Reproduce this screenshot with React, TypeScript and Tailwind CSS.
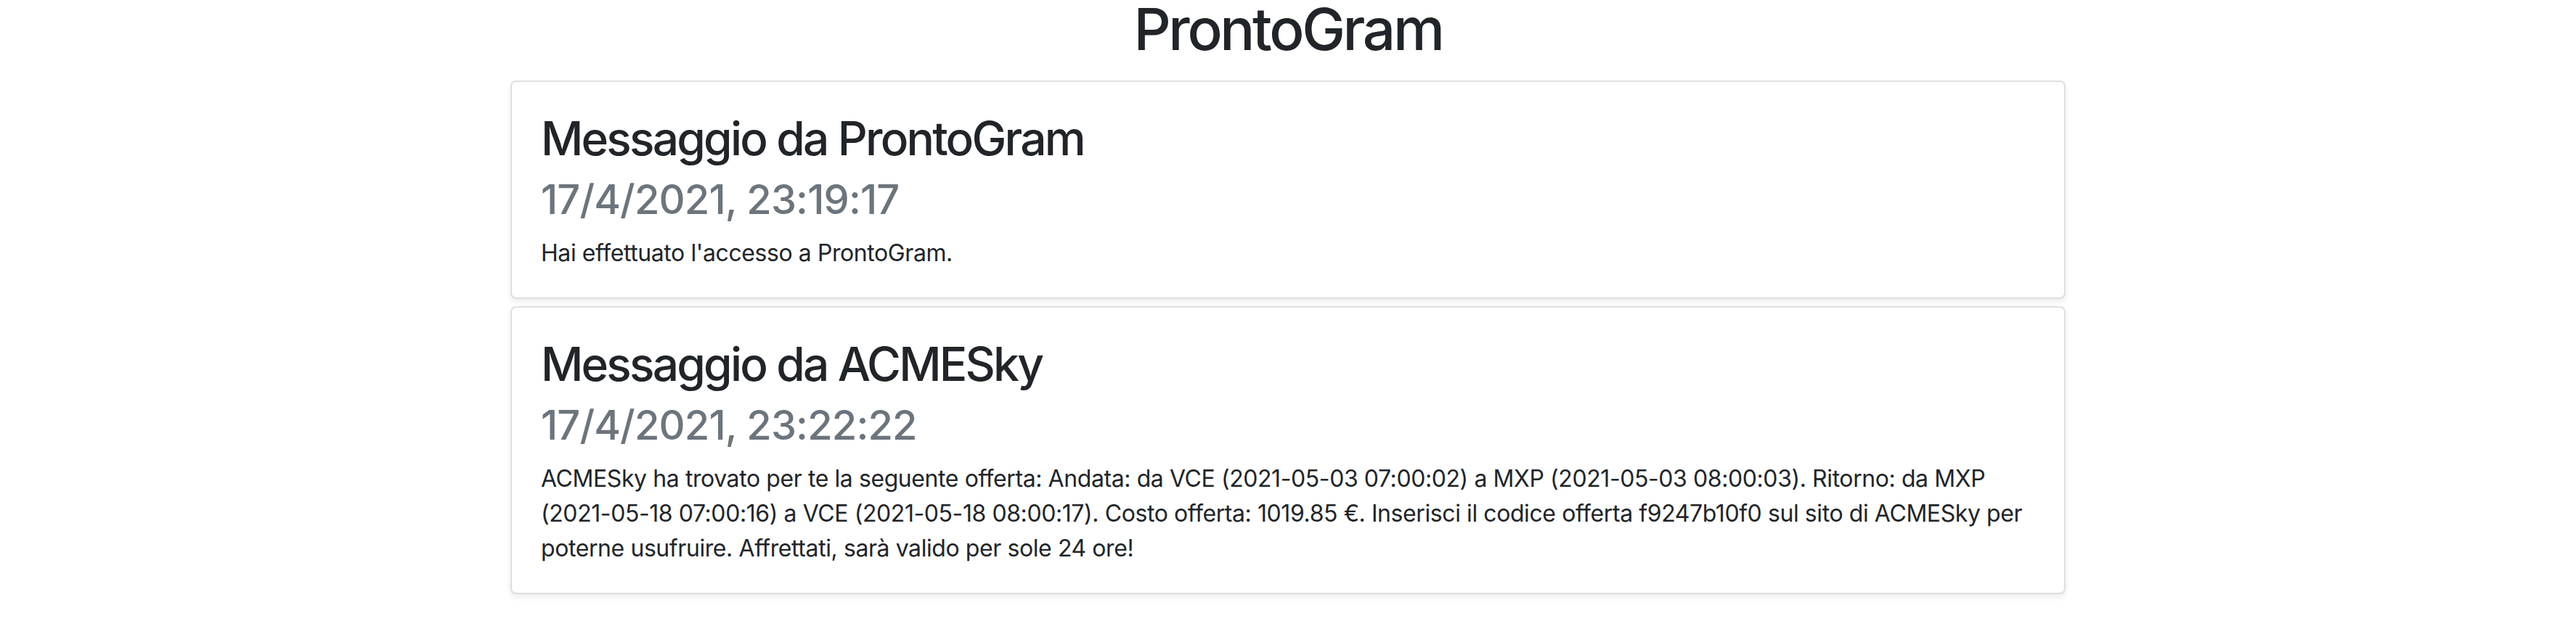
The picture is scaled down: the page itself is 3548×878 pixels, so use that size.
import React from "react";

const font = { fontFamily: "Inter, 'Noto Sans', sans-serif" };

function Card({ title, date, children }: { title: string; date: string; children: React.ReactNode }) {
  return (
    <div className="w-[2142px] mx-auto bg-white border-2 border-[#dfdfdf] rounded-[8px] shadow-[0_4px_8px_rgba(0,0,0,0.075)] px-[40px] pt-[40px] pb-[37px]">
      <h2 className="text-[64px] leading-[76.8px] font-medium tracking-[-0.044em] text-[#212529] mb-[12px]">{title}</h2>
      <h3 className="text-[56px] leading-[67.2px] font-medium tracking-[-0.016em] text-[#6c757d] mb-[16px]">{date}</h3>
      <p className="text-[32px] leading-[48px] font-normal tracking-[-0.013em] text-[#212529] whitespace-nowrap">{children}</p>
    </div>
  );
}

export default function App() {
  return (
    <div className="w-full min-h-[878px] bg-white" style={font}>
      <h1 className="text-center text-[80px] leading-[80px] font-medium tracking-[-0.042em] text-[#212529] mb-[31px]">ProntoGram</h1>
      <div className="flex flex-col gap-[10px]">
        <Card title="Messaggio da ProntoGram" date="17/4/2021, 23:19:17">
          Hai effettuato l'accesso a ProntoGram.
        </Card>
        <Card title="Messaggio da ACMESky" date="17/4/2021, 23:22:22">
          ACMESky ha trovato per te la seguente offerta: Andata: da VCE (2021-05-03 07:00:02) a MXP (2021-05-03 08:00:03). Ritorno: da MXP
          <br />
          (2021-05-18 07:00:16) a VCE (2021-05-18 08:00:17). Costo offerta: 1019.85 €. Inserisci il codice offerta f9247b10f0 sul sito di ACMESky per
          <br />
          poterne usufruire. Affrettati, sarà valido per sole 24 ore!
        </Card>
      </div>
    </div>
  );
}
